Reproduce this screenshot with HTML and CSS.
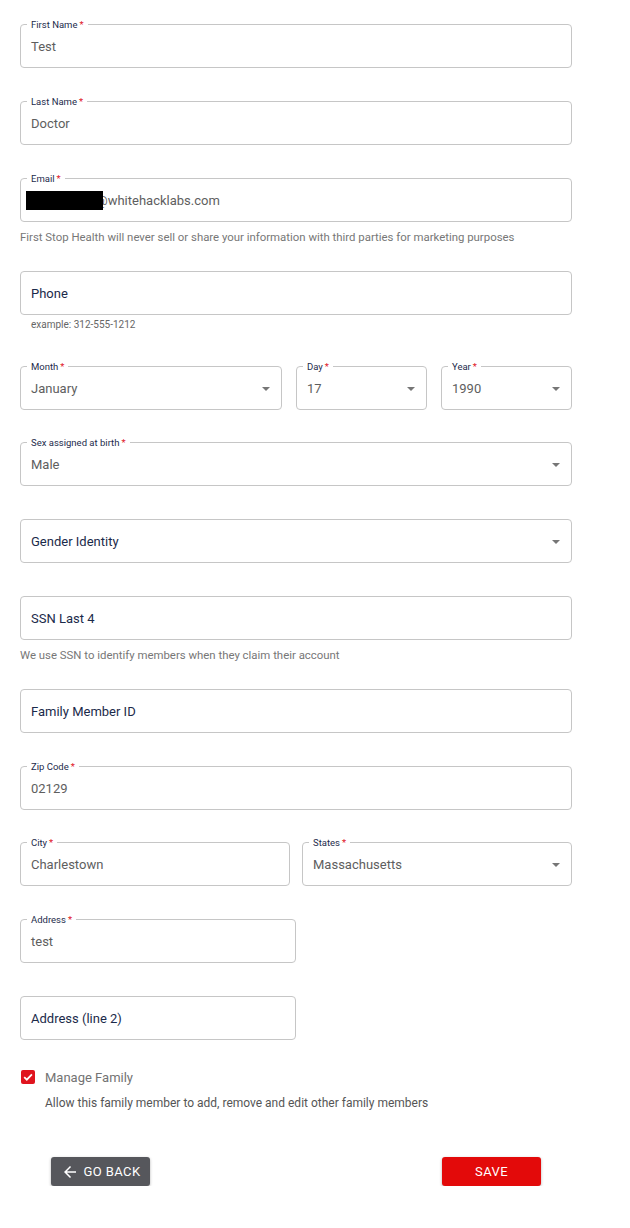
FILE: index.html
```html
<!DOCTYPE html>
<html>
<head>
<meta charset="utf-8">
<link rel="stylesheet" href="styles.css">
</head>
<body>
<form class="form">
  <div class="group">
    <div class="field"><span class="label">First Name<b>*</b></span><span class="value">Test</span></div>
  </div>
  <div class="group">
    <div class="field"><span class="label">Last Name<b>*</b></span><span class="value">Doctor</span></div>
  </div>
  <div class="group help">
    <div class="field"><span class="label">Email<b>*</b></span><span class="value email"><span class="redact"></span>@whitehacklabs.com</span></div>
    <div class="helper">First Stop Health will never sell or share your information with third parties for marketing purposes</div>
  </div>
  <div class="group phone">
    <div class="field"><span class="placeholder">Phone</span></div>
    <div class="helper small">example: 312-555-1212</div>
  </div>
  <div class="group row3">
    <div class="field select"><span class="label">Month<b>*</b></span><span class="value">January</span><i class="caret"></i></div>
    <div class="field select"><span class="label">Day<b>*</b></span><span class="value">17</span><i class="caret"></i></div>
    <div class="field select"><span class="label">Year<b>*</b></span><span class="value">1990</span><i class="caret"></i></div>
  </div>
  <div class="group">
    <div class="field select"><span class="label">Sex assigned at birth<b>*</b></span><span class="value">Male</span><i class="caret"></i></div>
  </div>
  <div class="group">
    <div class="field select"><span class="placeholder">Gender Identity</span><i class="caret"></i></div>
  </div>
  <div class="group help">
    <div class="field"><span class="placeholder">SSN Last 4</span></div>
    <div class="helper">We use SSN to identify members when they claim their account</div>
  </div>
  <div class="group">
    <div class="field"><span class="placeholder">Family Member ID</span></div>
  </div>
  <div class="group tight">
    <div class="field"><span class="label">Zip Code<b>*</b></span><span class="value">02129</span></div>
  </div>
  <div class="group row2">
    <div class="field"><span class="label">City<b>*</b></span><span class="value">Charlestown</span></div>
    <div class="field select"><span class="label">States<b>*</b></span><span class="value">Massachusetts</span><i class="caret"></i></div>
  </div>
  <div class="group half">
    <div class="field"><span class="label">Address<b>*</b></span><span class="value">test</span></div>
  </div>
  <div class="group half last">
    <div class="field"><span class="placeholder">Address (line 2)</span></div>
  </div>
  <div class="check-row">
    <span class="checkbox"><svg viewBox="0 0 14 14" width="14" height="14"><path d="M3.2 7.2 L5.8 9.7 L10.9 4.4" fill="none" stroke="#fff" stroke-width="1.8"/></svg></span>
    <span class="check-label">Manage Family</span>
  </div>
  <div class="check-help">Allow this family member to add, remove and edit other family members</div>
  <div class="actions">
    <button type="button" class="btn back"><svg viewBox="0 0 24 24" width="18" height="18"><path fill="#fff" d="M20 11H7.83l5.59-5.59L12 4l-8 8 8 8 1.41-1.41L7.83 13H20v-2z"/></svg>GO BACK</button>
    <button type="button" class="btn save">SAVE</button>
  </div>
</form>
</body>
</html>
```

FILE: styles.css
```css
* { box-sizing: border-box; }
body {
  margin: 0;
  background: #fff;
  font-family: Roboto, "Liberation Sans", sans-serif;
}
.form {
  width: 552px;
  margin-left: 20px;
  padding-top: 24px;
}
.group { margin-bottom: 33px; }
.group.tight { margin-bottom: 32px; }
.group.help { margin-bottom: 26px; }
.group.phone { margin-bottom: 35px; }
.group.last { margin-bottom: 0; }
.group.row3 {
  display: grid;
  grid-template-columns: 262px 131px 131px;
  column-gap: 14px;
  margin-bottom: 32px;
}
.group.row2 {
  display: grid;
  grid-template-columns: 270px 270px;
  column-gap: 12px;
}
.group.half { width: 276px; }
.field {
  position: relative;
  height: 44px;
  border: 1px solid #c6c6c6;
  border-radius: 4px;
  display: flex;
  align-items: center;
  padding: 0 10px;
}
.label {
  position: absolute;
  top: -6px;
  left: 6px;
  padding: 0 4px;
  background: #fff;
  font-size: 9.5px;
  line-height: 11px;
  color: #1d2b4c;
}
.label b {
  font-weight: 400;
  color: #e0141e;
  margin-left: 2px;
}
.value {
  font-size: 13px;
  color: #5e5e5e;
}
.placeholder {
  font-size: 13px;
  color: #1b2a4a;
}
.email { position: relative; left: -5px; }
.redact {
  position: relative;
  z-index: 1;
  display: inline-block;
  width: 77px;
  height: 19px;
  background: #000;
  vertical-align: -5px;
  margin-right: -7px;
}
.caret {
  position: absolute;
  right: 11px;
  top: 20px;
  width: 0;
  height: 0;
  border-left: 4.5px solid transparent;
  border-right: 4.5px solid transparent;
  border-top: 4.5px solid #767676;
}
.helper {
  margin-top: 8px;
  font-size: 11.4px;
  line-height: 15px;
  color: #777;
}
.helper.small {
  margin-top: 4px;
  padding-left: 11px;
  font-size: 10px;
  line-height: 12px;
  color: #666;
}
.check-row {
  display: flex;
  align-items: center;
  padding-left: 1px;
  margin-top: 30px;
  height: 14px;
}
.checkbox {
  width: 14px;
  height: 14px;
  background: #e0141e;
  border-radius: 2px;
  display: flex;
}
.check-label {
  margin-left: 10px;
  font-size: 13px;
  color: #737373;
}
.check-help {
  margin-top: 12px;
  padding-left: 25px;
  font-size: 12px;
  line-height: 15px;
  color: #555;
}
.actions {
  display: flex;
  justify-content: space-between;
  padding: 0 31px;
  margin-top: 46px;
}
.btn {
  height: 29px;
  width: 99px;
  border: none;
  border-radius: 3px;
  color: #fff;
  font-family: Roboto, "Liberation Sans", sans-serif;
  font-size: 13px;
  font-weight: 400;
  letter-spacing: 0.4px;
  display: flex;
  align-items: center;
  justify-content: center;
  box-shadow: 0 1px 3px rgba(0,0,0,0.3);
}
.btn svg { margin-right: 5px; }
.back { background: #56575c; }
.save { background: #e30a0a; }
```
